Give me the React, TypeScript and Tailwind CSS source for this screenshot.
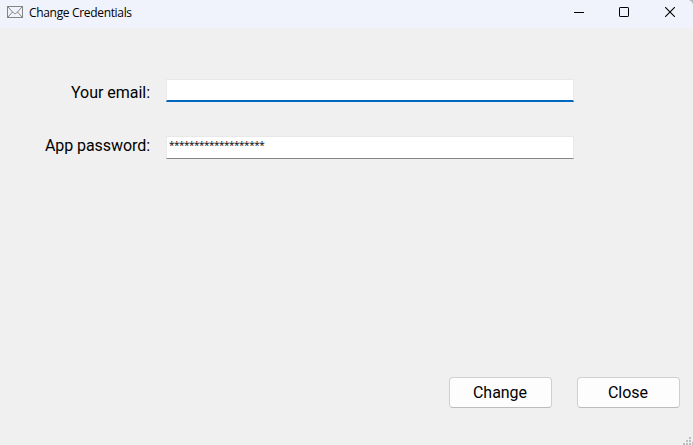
import { useState } from 'react';

function TitleBar() {
  return (
    <header className="flex h-[28px] shrink-0 items-start bg-[#f0f3fb]">
      <svg className="ml-[7px] mt-[6px] shrink-0" width="16" height="12" viewBox="0 0 16 12" fill="none" stroke="#858585">
        <rect x="0.5" y="0.5" width="15" height="11" />
        <path d="M1 1l5.5 6c1 .9 2 .9 3 0L15 1M1 11l4.5-5M15 11l-4.5-5" />
      </svg>
      <h1 className="ml-[6px] mt-[5px] whitespace-nowrap font-['Open_Sans',sans-serif] text-[12px] leading-4 tracking-[-0.33px] text-black">
        Change Credentials
      </h1>
      <div className="ml-auto mr-[18px] mt-[7px] flex gap-[35px]">
        <button aria-label="Minimize">
          <svg className="block" width="10" height="10" viewBox="0 0 10 10"><path d="M0 5.5h10" stroke="#000" /></svg>
        </button>
        <button aria-label="Maximize">
          <svg className="block" width="10" height="10" viewBox="0 0 10 10"><rect x=".5" y=".5" width="9" height="9" rx=".6" fill="none" stroke="#000" /></svg>
        </button>
        <button aria-label="Close window" className="ml-[1px]">
          <svg className="block" width="10" height="10" viewBox="0 0 10 10"><path d="M0 0l10 10M10 0L0 10" stroke="#000" strokeWidth="1.1" /></svg>
        </button>
      </div>
    </header>
  );
}

function DialogButton({ label }: { label: string }) {
  return (
    <button className="h-[31px] w-[103px] rounded-[4px] border border-[#d0d0d0] border-b-[#bcbcbc] bg-[#fdfdfd] pr-[1px] text-[16px] leading-[29px] tracking-[-0.03px] text-black">
      {label}
    </button>
  );
}

export default function App() {
  const [email, setEmail] = useState('');
  return (
    <div className="relative flex h-[445px] w-[693px] flex-col overflow-hidden bg-[#f0f0f0] font-[Roboto,sans-serif] text-[16px] text-black">
      <TitleBar />
      <main className="flex flex-1 flex-col">
        <div className="mt-[51px] flex h-[23px]">
          <label htmlFor="email" className="mr-[16px] w-[150px] pt-[2px] text-right leading-6 tracking-[-0.03px]">Your email:</label>
          <input
            id="email"
            value={email}
            onChange={(e) => setEmail(e.target.value)}
            className="h-[23px] w-[408px] border border-b-2 border-[#e8e8e8] border-b-[#0067c0] bg-white px-[3px] text-[12px] outline-none"
          />
        </div>
        <div className="mt-[34px] flex h-[23px]">
          <label className="mr-[16px] w-[150px] pt-px text-right leading-[18px] tracking-[-0.06px]">App password:</label>
          <div className="h-[23px] w-[408px] border border-[#e8e8e8] border-b-[#868686] bg-white pl-[2px] font-['Open_Sans',sans-serif] text-[10px] leading-[16px] tracking-[-0.5px] text-black">
            *******************
          </div>
        </div>
        <div className="mb-[37px] ml-auto mr-[13px] mt-auto flex gap-[25px]">
          <DialogButton label="Change" />
          <DialogButton label="Close" />
        </div>
      </main>
      <svg className="absolute right-0 top-0" width="4" height="4" viewBox="0 0 4 4">
        <path d="M0 0h4v4L2.5 1.5z" fill="#b5b8be" />
      </svg>
      <svg className="absolute bottom-0 right-0" width="10" height="9" viewBox="0 0 10 9" fill="#bdbdbd">
        <path d="M6 1h2v2H6zM3 4h2v2H3zM6 4h2v2H6zM0 7h2v2H0zM3 7h2v2H3zM6 7h2v2H6zM9 6h1v3H9z" />
      </svg>
    </div>
  );
}
